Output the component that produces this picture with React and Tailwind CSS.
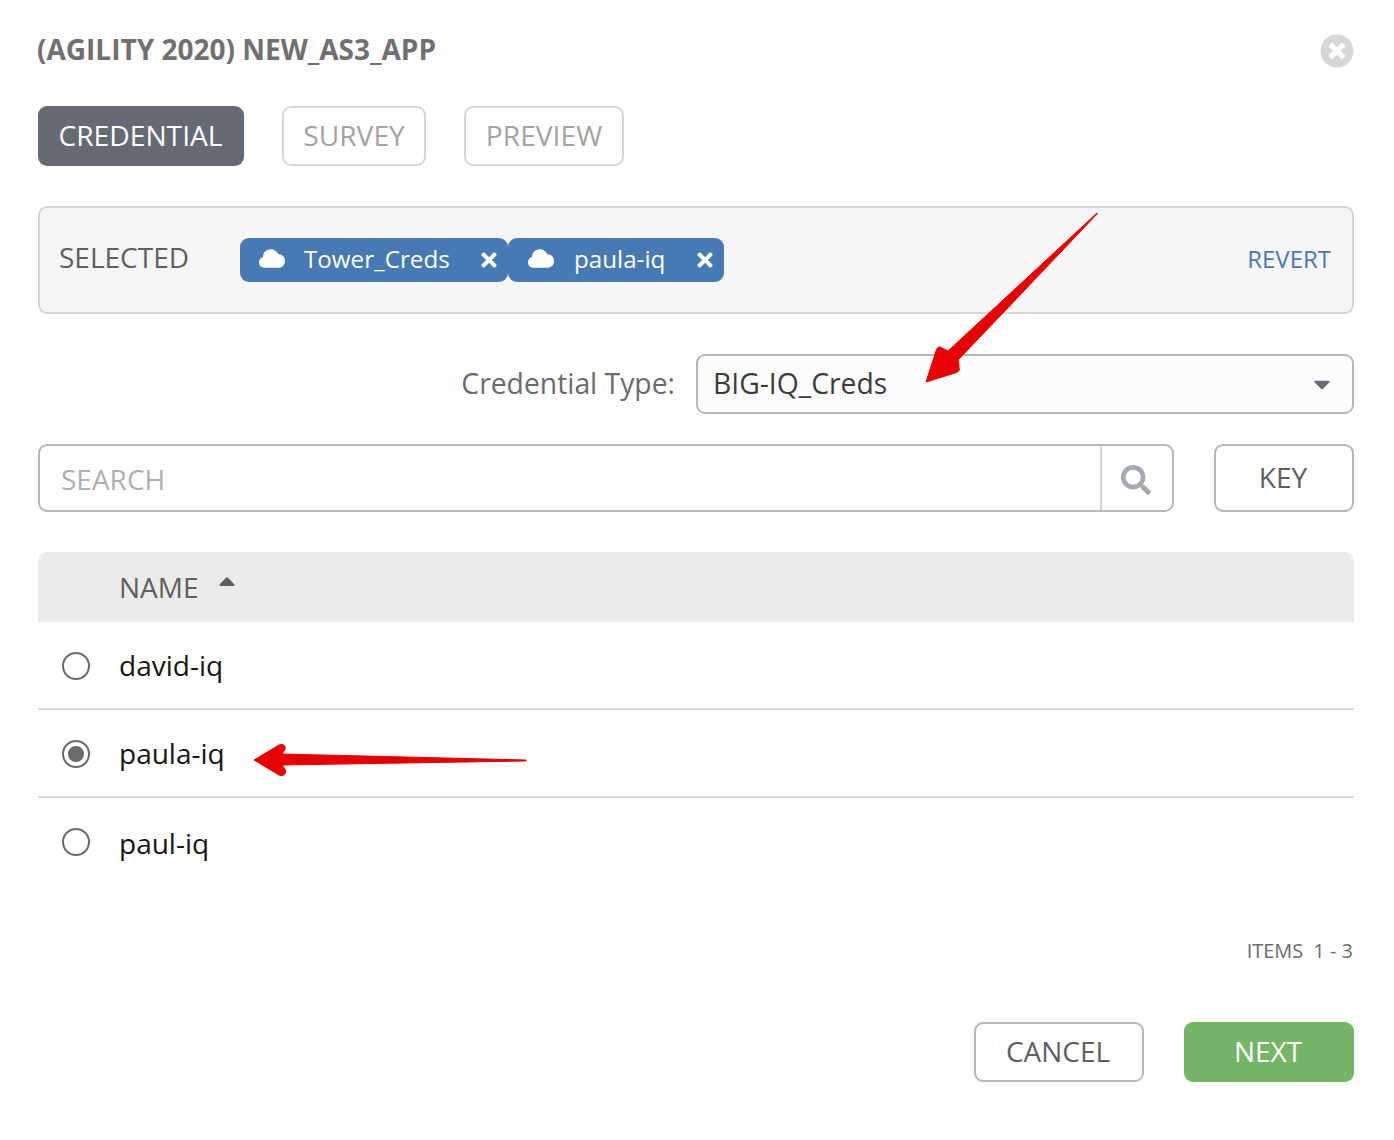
import React from "react";
import { FaTimes, FaSearch, FaCaretDown, FaCaretUp, FaTimesCircle } from "react-icons/fa";

const Cloud = () => (
  <svg className="-mt-[3px] h-[19px] w-[26px] shrink-0" viewBox="0 0 78 55" fill="currentColor">
    <path d="M15 55 C5 55 0 47 0 39 C0 31 5 25 12 23 C12 10 22 0 36 0 C46 0 54 6 58 15 C70 14 78 24 78 35 C78 46 70 55 60 55 Z" />
  </svg>
);

const Radio = ({ checked, offset }) => (
  <span className={`flex h-[28px] w-[28px] items-center justify-center rounded-full border-2 border-[#6b6b6b] bg-white ${offset}`}>
    {checked && <span className="h-[16px] w-[16px] rounded-full bg-[#6b6b6b]" />}
  </span>
);

const Chip = ({ label, w, pad, gap }) => (
  <div className={`flex h-[44px] items-center rounded-[9px] bg-[#4779b3] text-[24.2px] leading-none text-white ${w} ${pad}`}>
    <Cloud />
    <span className={`${gap} -mt-[1px]`}>{label}</span>
    <FaTimes className="ml-auto mr-[8px] h-[22px] w-[22px] shrink-0" />
  </div>
);

const Row = ({ name, checked, h, border, offset }) => (
  <div className={`flex items-center pl-[24px] ${h} ${border ? "border-b-2 border-[#d7d7d7]" : ""}`}>
    <Radio checked={checked} offset={offset} />
    <span className="ml-[29px] text-[28px] leading-none text-[#161616]">{name}</span>
  </div>
);

export default function App() {
  return (
    <div className="relative h-[1140px] w-[1394px] overflow-hidden bg-white pl-[38px] pr-[40px] font-['Open_Sans',sans-serif]">
      <div className="flex h-[106px] items-start justify-between">
        <h1 className="mt-[30px] -ml-[1px] text-[28px] font-bold leading-[38px] text-[#707070]">(AGILITY 2020) NEW_AS3_APP</h1>
        <FaTimesCircle className="mt-[34px] h-[34px] w-[34px] text-[#d7d7d7]" />
      </div>

      <div className="flex gap-[38px] text-[28.2px] leading-none">
        <div className="flex h-[60px] w-[206px] items-center justify-center rounded-[9px] bg-[#666a73] pb-[2px] pr-[1px] text-white">CREDENTIAL</div>
        <div className="flex h-[60px] w-[144px] items-center justify-center rounded-[9px] border-2 border-[#d7d7d7] pb-[2px] text-[#a3a3a3]">SURVEY</div>
        <div className="flex h-[60px] w-[160px] items-center justify-center rounded-[9px] border-2 border-[#d7d7d7] pb-[2px] text-[#a3a3a3]">PREVIEW</div>
      </div>

      <div className="mt-[40px] flex h-[108px] items-center rounded-[9px] border-2 border-[#d7d7d7] bg-[#f6f6f6] pl-[19px] pr-[21px]">
        <span className="-mt-[7px] w-[181px] text-[28px] leading-none text-[#5f5f5f]">SELECTED</span>
        <div className="-mt-[1px] flex">
          <Chip label="Tower_Creds" w="w-[268px]" pad="pl-[19px]" gap="ml-[19px]" />
          <Chip label="paula-iq" w="w-[216px]" pad="pl-[20px]" gap="ml-[20px]" />
        </div>
        <span className="ml-auto -mt-[3px] text-[24px] leading-none text-[#4779b3]">REVERT</span>
      </div>

      <div className="mt-[40px] flex h-[60px] items-center">
        <span className="-mt-[2px] w-[658px] pr-[21px] text-right text-[28.3px] leading-none text-[#6b6b6b]">Credential Type:</span>
        <div className="flex h-[60px] flex-1 items-center justify-between rounded-[9px] border-2 border-[#b7b7b7] bg-[#fcfcfc] pl-[15px] pr-[19px]">
          <span className="-mt-[2px] text-[28.3px] leading-none text-[#3c3c3c]">BIG-IQ_Creds</span>
          <FaCaretDown className="h-[26px] w-[22px] text-[#666a73]" />
        </div>
      </div>

      <div className="mt-[30px] flex justify-between">
        <div className="flex h-[68px] w-[1136px] items-stretch rounded-[9px] border-2 border-[#b7b7b7] bg-white">
          <span className="flex flex-1 items-center pl-[21px] pt-[2px] text-[28px] leading-none text-[#b0b0b0]">SEARCH</span>
          <span className="flex w-[72px] items-center justify-center border-l-2 border-[#d7d7d7] pt-[3px] pr-[2px]">
            <FaSearch className="h-[30px] w-[30px] text-[#a5a8ad]" />
          </span>
        </div>
        <div className="flex h-[68px] w-[140px] items-center justify-center rounded-[9px] border-2 border-[#b7b7b7] pb-[2px] pr-[2px] text-[28px] leading-none text-[#5f5f5f]">KEY</div>
      </div>

      <div className="mt-[40px] flex h-[70px] items-center rounded-t-[9px] bg-[#ebebeb] pl-[81px]">
        <span className="text-[28px] leading-none text-[#5f5f5f]">NAME</span>
        <FaCaretUp className="ml-[18px] -mt-[12px] h-[26px] w-[20px] text-[#5f5f5f]" />
      </div>

      <Row name="david-iq" h="h-[88px]" border offset="mt-[2px]" />
      <Row name="paula-iq" checked h="h-[88px]" border offset="mt-[2px]" />
      <Row name="paul-iq" h="h-[90px]" offset="-mt-[2px]" />

      <div className="mt-[49px] flex justify-end gap-[10px] pr-[1px] text-[20px] leading-[28px] text-[#6b6b6b]">
        <span>ITEMS</span>
        <span>1 - 3</span>
      </div>

      <div className="mt-[57px] flex justify-end gap-[40px] text-[28px] leading-none">
        <div className="flex h-[60px] w-[170px] items-center justify-center rounded-[9px] border-2 border-[#b7b7b7] pb-[2px] pr-[2px] text-[#5f5f5f]">CANCEL</div>
        <div className="flex h-[60px] w-[170px] items-center justify-center rounded-[9px] bg-[#74b566] pb-[2px] pr-[2px] text-white">NEXT</div>
      </div>

      <svg className="pointer-events-none absolute left-0 top-0" width="1394" height="1140" viewBox="0 0 1394 1140">
        <path
          d="M1097 213 L1097 214 L1003 313 L958 360 C959 363 959 366 959 368 C960 371 958 372 955 373 L926 382 L936 351 C937 347 940 346 942 348 L948 351 Z"
          fill="#e60000"
          stroke="#e60000"
          strokeWidth="1"
          strokeLinejoin="round"
        />
        <path
          d="M526 760 L526 761 L282 765 L285 769 C287 773 284 777 279 775 L254 760 L279 745 C284 743 287 747 284 751 L282 754 Z"
          fill="#e60000"
          stroke="#e60000"
          strokeWidth="1"
          strokeLinejoin="round"
        />
      </svg>
    </div>
  );
}
